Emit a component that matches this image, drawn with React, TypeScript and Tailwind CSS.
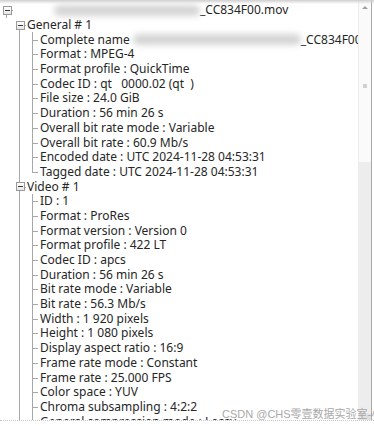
import React from 'react';

const Blur: React.FC<{ w: string }> = ({ w }) => (
  <span className={`inline-block h-[11px] ${w} rounded-full bg-[#d4d4d4] blur-[3px] align-middle`} />
);

const general: string[] = [
  'Format : MPEG-4',
  'Format profile : QuickTime',
  'Codec ID : qt   0000.02 (qt  )',
  'File size : 24.0 GiB',
  'Duration : 56 min 26 s',
  'Overall bit rate mode : Variable',
  'Overall bit rate : 60.9 Mb/s',
  'Encoded date : UTC 2024-11-28 04:53:31',
  'Tagged date : UTC 2024-11-28 04:53:31',
];

const video: string[] = [
  'ID : 1',
  'Format : ProRes',
  'Format version : Version 0',
  'Format profile : 422 LT',
  'Codec ID : apcs',
  'Duration : 56 min 26 s',
  'Bit rate mode : Variable',
  'Bit rate : 56.3 Mb/s',
  'Width : 1 920 pixels',
  'Height : 1 080 pixels',
  'Display aspect ratio : 16:9',
  'Frame rate mode : Constant',
  'Frame rate : 25.000 FPS',
  'Color space : YUV',
  'Chroma subsampling : 4:2:2',
  'General compression mode : Lossy',
];

type Kind = 'none' | 'line' | 'branch' | 'corner' | 'box' | 'boxTop';

// small [-] expander like the classic windows tree
const Expander: React.FC = () => (
  <span className="relative z-10 flex h-[9px] w-[9px] items-center justify-center border border-[#9a9a9a] bg-gradient-to-b from-white to-[#e6e6e6]">
    <span className="h-px w-[5px] bg-[#3a3a3a]" />
  </span>
);

// one 13px column of tree lines
const Gutter: React.FC<{ kind: Kind }> = ({ kind }) => (
  <span className="relative h-full w-[13px] shrink-0">
    {(kind === 'line' || kind === 'branch') && (
      <span className="absolute left-[6px] top-0 h-full w-px bg-[#a8a8a8]" />
    )}
    {kind === 'corner' && <span className="absolute left-[6px] top-0 h-1/2 w-px bg-[#a8a8a8]" />}
    {(kind === 'branch' || kind === 'corner') && (
      <span className="absolute left-[6px] top-1/2 h-px w-[6px] bg-[#a8a8a8]" />
    )}
    {(kind === 'box' || kind === 'boxTop') && (
      <>
        {kind === 'boxTop' && <span className="absolute left-[6px] top-0 h-1/2 w-px bg-[#a8a8a8]" />}
        <span className="absolute left-[6px] top-1/2 h-1/2 w-px bg-[#a8a8a8]" />
        <span className="absolute left-[6px] top-1/2 h-px w-[7px] bg-[#a8a8a8]" />
        <span className="absolute inset-0 flex items-center justify-center pl-px">
          <Expander />
        </span>
      </>
    )}
  </span>
);

const TreeRow: React.FC<{ cols: Kind[]; children: React.ReactNode }> = ({ cols, children }) => (
  <div className="flex h-[14.7px] items-stretch">
    {cols.map((c, i) => (
      <Gutter key={i} kind={c} />
    ))}
    <span className="flex items-center whitespace-pre pl-px">{children}</span>
  </div>
);

export default function App() {
  return (
    <div
      className="relative h-[426px] w-[374px] overflow-hidden bg-white text-[12px] leading-[14px] text-[#262626]"
      style={{ fontFamily: '"Noto Sans", "Open Sans", sans-serif' }}
    >
      <div className="flex h-[421px] border-b border-dotted border-[#c8c8c8]">
        <div className="flex-1 overflow-hidden pt-[3px]">
          {/* root */}
          <TreeRow cols={['box']}>
            <span className="flex items-center">
              <span className="ml-[40px]" />
              <Blur w="w-[146px]" />
              <span>_CC834F00.mov</span>
            </span>
          </TreeRow>

          <TreeRow cols={['none', 'box']}>General # 1</TreeRow>
          <TreeRow cols={['none', 'line', 'branch']}>
            <span className="flex items-center">
              Complete name <Blur w="w-[168px]" />
              _CC834F00.mov
            </span>
          </TreeRow>
          {general.map((t, i) => (
            <TreeRow key={t} cols={['none', 'line', i === general.length - 1 ? 'corner' : 'branch']}>
              {t}
            </TreeRow>
          ))}

          <TreeRow cols={['none', 'boxTop']}>Video # 1</TreeRow>
          {video.map((t) => (
            <TreeRow key={t} cols={['none', 'line', 'branch']}>
              {t}
            </TreeRow>
          ))}
        </div>

        {/* vertical scrollbar */}
        <div className="flex w-[13px] flex-col border-l border-[#ececec] bg-[#fafafa]">
          <div className="flex h-[14px] items-center justify-center">
            <span className="h-0 w-0 border-x-[3px] border-b-[3px] border-x-transparent border-b-[#a0a0a0]" />
          </div>
          <div className="flex h-[148px] flex-col items-center pt-[70px]">
            <span className="h-[4px] w-[4px] bg-[#d0d0d0]" />
          </div>
          <div className="flex-1 bg-[#ededed]" />
          <div className="h-[6px] bg-[#e0e0e0]" />
        </div>
        <div className="w-px bg-[#a8a8a8]" />
        <div className="w-[2px] bg-white" />
      </div>

      {/* top shading */}
      <div className="pointer-events-none absolute left-0 top-0 h-[4px] w-full bg-gradient-to-b from-[#cfcfcf] to-transparent" />

      {/* watermark */}
      <div
        className="pointer-events-none absolute left-[222px] top-[407px] whitespace-nowrap text-[11px] text-[#a9a9a9]"
        style={{ fontFamily: '"Liberation Sans", "Noto Sans CJK SC", sans-serif' }}
      >
        CSDN @CHS零壹数据实验室-小猫
      </div>
    </div>
  );
}
